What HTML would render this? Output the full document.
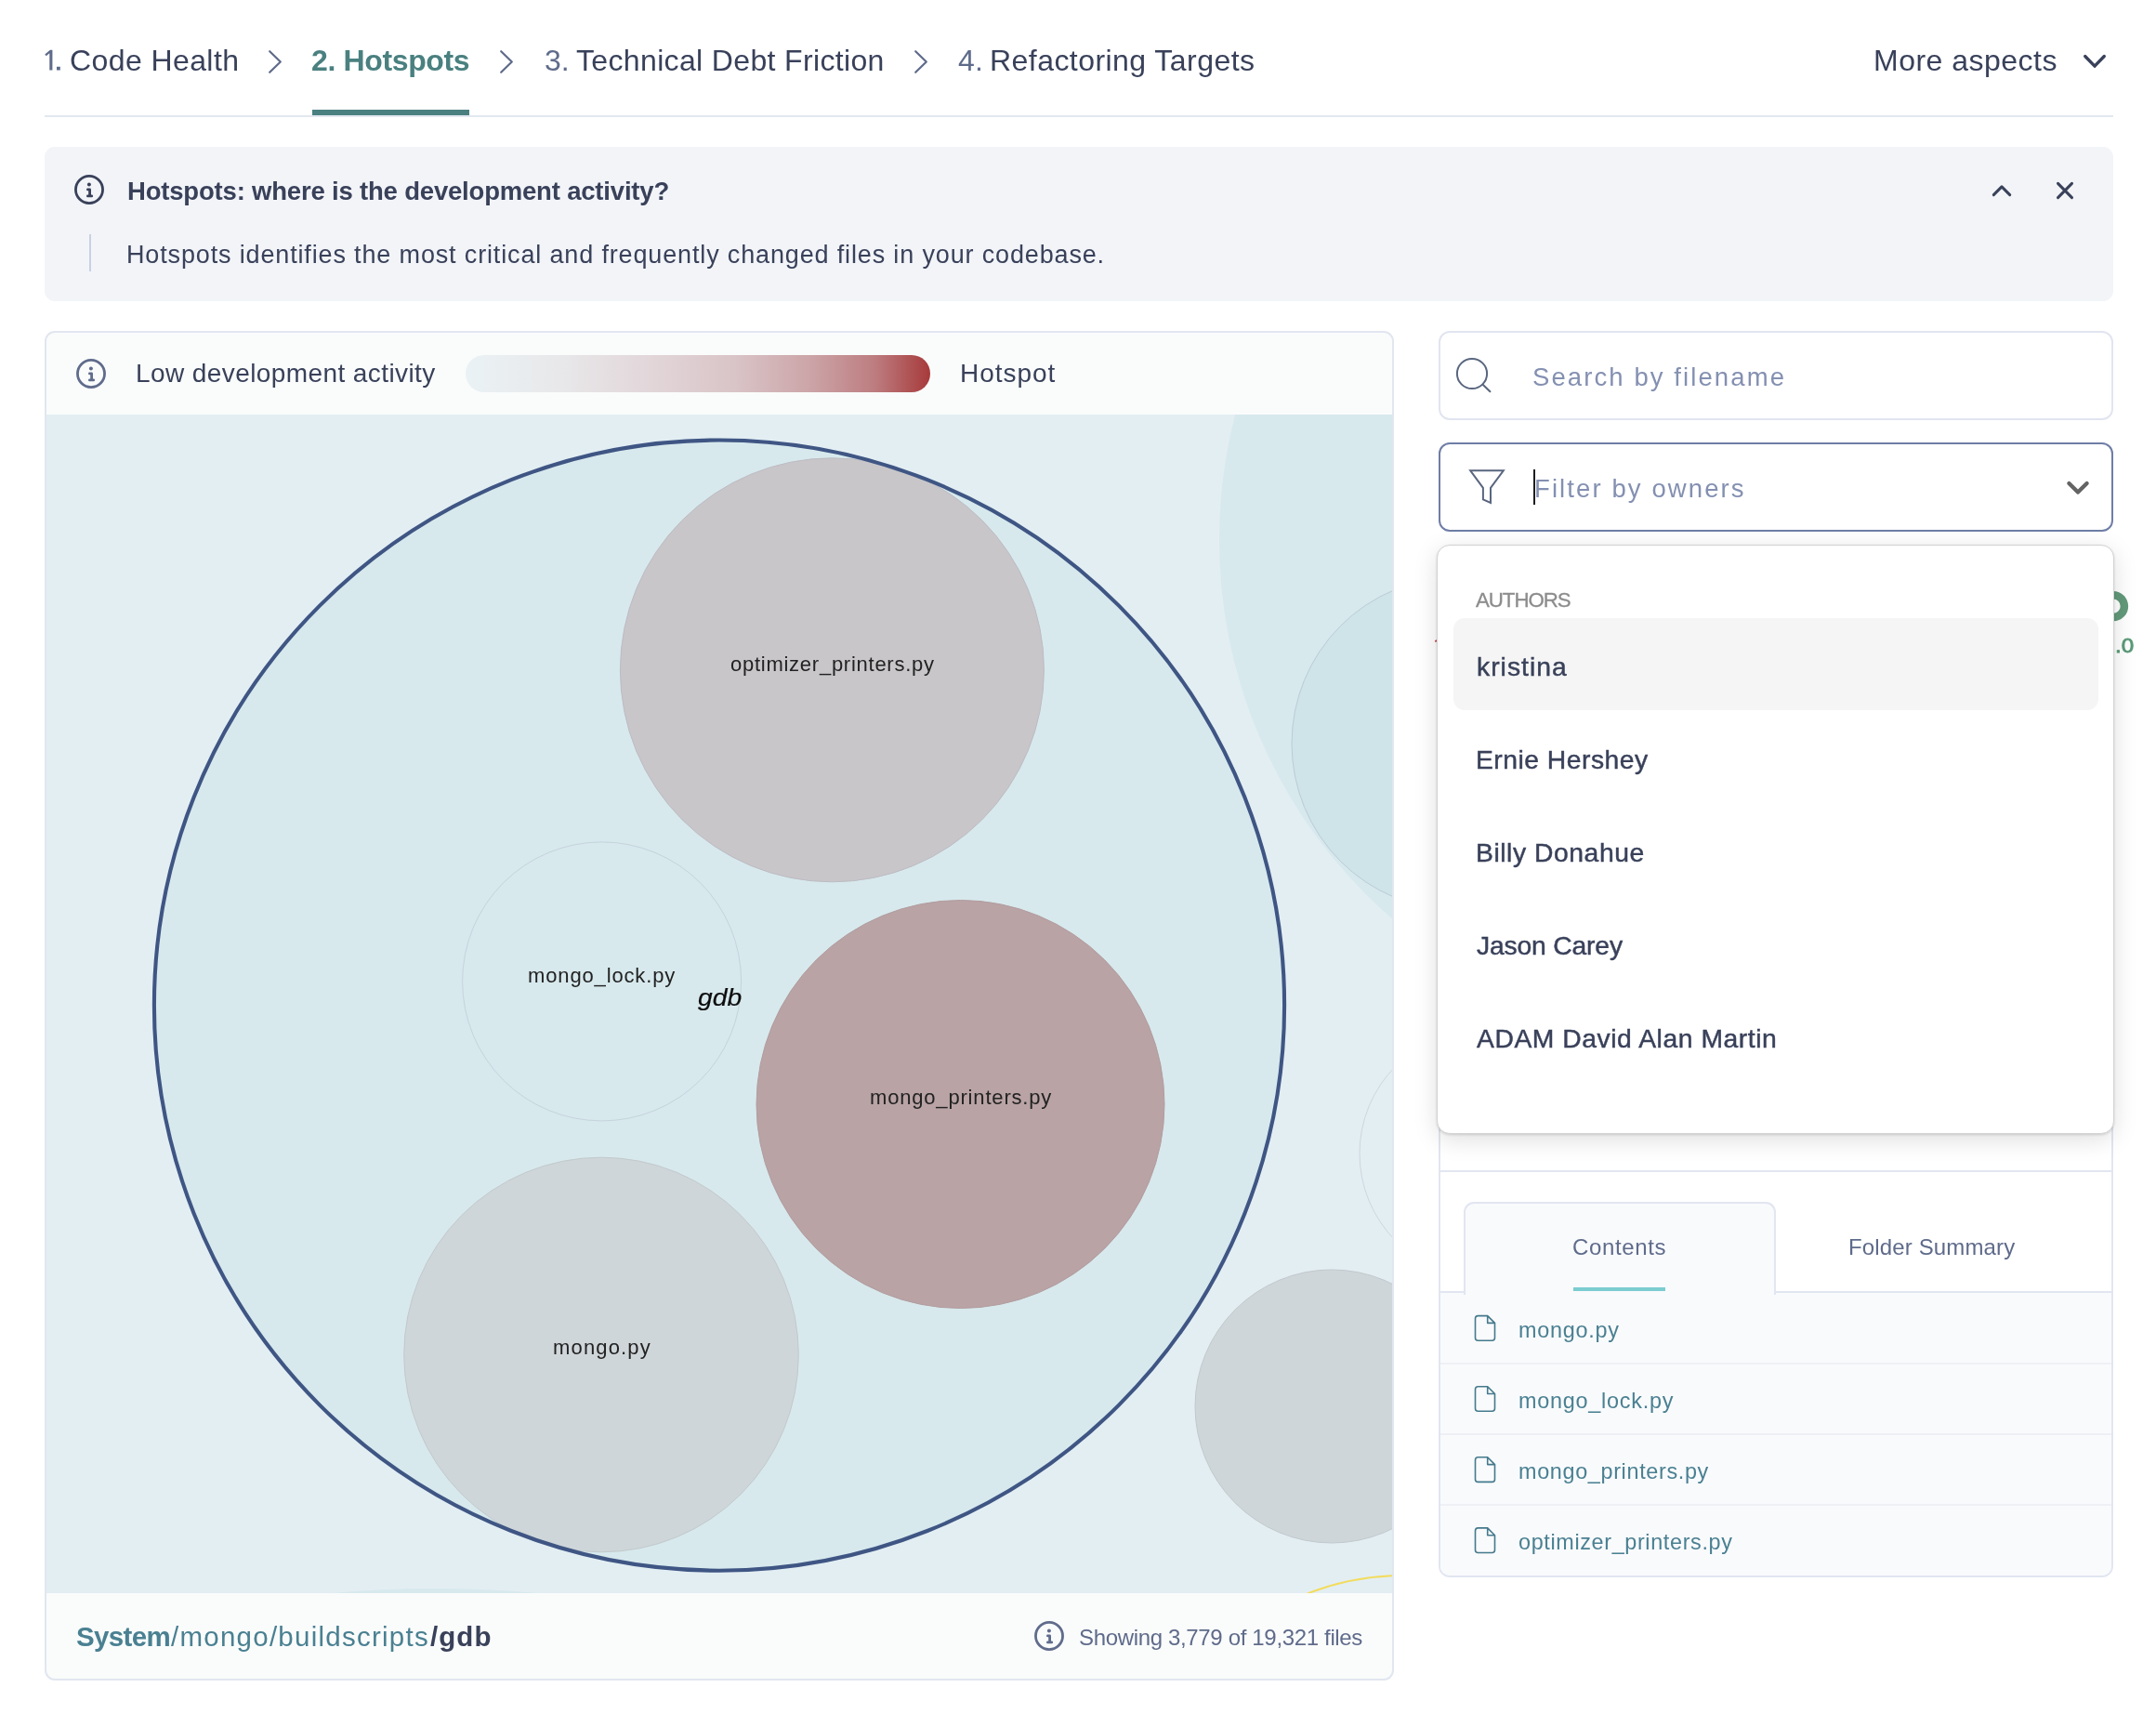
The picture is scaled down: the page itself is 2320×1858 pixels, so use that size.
<!DOCTYPE html>
<html lang="en">
<head>
<meta charset="utf-8">
<title>Hotspots</title>
<style>
*{box-sizing:border-box;margin:0;padding:0}
html,body{width:2320px;height:1858px;overflow:hidden;background:#fff}
body{position:relative;font-family:"Liberation Sans",sans-serif;color:#39415a}
.abs{position:absolute}
.t{position:absolute;white-space:nowrap;line-height:1;will-change:transform}
.navline{left:48px;top:124px;width:2226px;height:2px;background:#e3e8f0}
.navon{left:336px;top:118px;width:169px;height:6px;background:#4a8080}
.banner{left:48px;top:158px;width:2226px;height:166px;background:#f2f4f8;border-radius:11px}
.panel{left:48px;top:356px;width:1452px;height:1452px;border:2px solid #e1e6f0;border-radius:11px;overflow:hidden;background:#fafcfb}
.map{left:0;top:88px;width:1448px;height:1268px;background:#e3eef3;overflow:hidden}
.grad{left:450.5px;top:24px;width:500.5px;height:40px;border-radius:20px;background:linear-gradient(90deg,#eaf2f5 0%,#e8e8ea 20%,#e2d6d9 40%,#d9c4c7 58%,#cca5a8 74%,#bd7d80 88%,#a73a3b 100%)}
.box{left:1548px;width:726px;border-radius:12px;background:#fff}
.search{top:356px;height:96px;border:2px solid #e1e5f0}
.filter{top:476px;height:96px;border:2px solid #6f7ea6}
.drop{left:1546.3px;top:586.3px;width:729.2px;height:633.8px;background:#fff;border-radius:14px;border:1.7px solid #d3d3d3;box-shadow:0 6px 26px rgba(0,0,0,.13),0 1px 3px rgba(0,0,0,.14)}
.card{left:1548px;top:1170px;width:726px;height:527px;border:2px solid #e1e6f0;border-radius:12px;background:#fff;overflow:hidden}
</style>
</head>
<body>

<!-- NAV -->
<svg class="abs" style="left:0;top:40px" width="2320" height="50" viewBox="0 40 2320 50" fill="none" stroke-linecap="round" stroke-linejoin="round">
  <g stroke="#5f6b8b" stroke-width="2.2">
    <path d="M290.2 55.2 L301.8 66.5 L290.2 77.8"/>
    <path d="M539.2 55.2 L550.8 66.5 L539.2 77.8"/>
    <path d="M985.2 55.2 L996.8 66.5 L985.2 77.8"/>
  </g>
  <path d="M2243.7 60.5 L2254 71.2 L2264.3 60.5" stroke="#39415a" stroke-width="3.3"/>
  <path d="M48.3 58.4 L53.9 53.7 H56.4 V75.6 H53.3 V57.3 L49.7 60.3Z M61 71.8 H64.8 V75.6 H61Z" fill="#5f6b8b" stroke="none"/>
</svg>
<div class="abs navline"></div>
<div class="abs navon"></div>

<!-- BANNER -->
<div class="abs banner"></div>
<svg class="abs" style="left:79px;top:187.4px" width="34" height="34" viewBox="0 0 34 34" fill="none" stroke="#39415a" stroke-width="2.8" stroke-linecap="round" stroke-linejoin="round"><circle cx="17" cy="17" r="14.55"/><circle cx="16.9" cy="11.4" r="2" fill="#39415a" stroke="none"/><path d="M15.4 16.9H17.6V23.9M15.4 23.9H19.7"/></svg>
<div class="abs" style="left:96px;top:252px;width:2px;height:40px;background:#c9d0e2"></div>
<svg class="abs" style="left:2130px;top:185px" width="120" height="40" viewBox="2130 185 120 40" fill="none" stroke="#39415a" stroke-width="3" stroke-linecap="round" stroke-linejoin="round">
  <path d="M2145.3 209.6 L2154 200.9 L2162.7 209.6"/>
  <path d="M2214.5 197.4 L2229.5 212.6 M2229.5 197.4 L2214.5 212.6"/>
</svg>

<!-- MAP PANEL -->
<div class="abs panel">
  <div class="abs map">
    <svg class="abs" style="left:0;top:0" width="1448" height="1268" viewBox="50 446 1448 1268">
      <circle cx="1851" cy="581" r="539" fill="#d7e9ed"/>
      <circle cx="1569" cy="800" r="179" fill="#cee4e8" stroke="#bccbd6" stroke-width="1"/>
      <circle cx="1596" cy="1241" r="133" fill="#e3eef3" stroke="#cdd6dc" stroke-width="1"/>
      <circle cx="1433" cy="1513" r="147" fill="#cfd6d9" stroke="#c2c9cd" stroke-width="1"/>
      <circle cx="1510" cy="1978" r="283" fill="none" stroke="#f2dc5d" stroke-width="2"/>
      <circle cx="468" cy="2944" r="1235" fill="#d7e9ed"/>
      <circle cx="774" cy="1081.6" r="608.1" fill="#d7e9ed"/>
      <circle cx="895.4" cy="720.8" r="228" fill="#c8c6c9" stroke="#bdbcc4" stroke-width="1"/>
      <circle cx="647.6" cy="1055.9" r="150" fill="#d7e9ed" stroke="#c6d3dc" stroke-width="1"/>
      <circle cx="1033.5" cy="1188" r="219.5" fill="#b9a3a5" stroke="#b29da0" stroke-width="1"/>
      <circle cx="647" cy="1457.5" r="212.3" fill="#cfd6d9" stroke="#c2c9cd" stroke-width="1"/>
      <circle cx="774" cy="1081.6" r="608.1" fill="none" stroke="#3f5684" stroke-width="4.1"/>
    </svg>
  </div>
  <svg class="abs" style="left:31px;top:26.9px" width="34" height="34" viewBox="0 0 34 34" fill="none" stroke="#606c8c" stroke-width="2.8" stroke-linecap="round" stroke-linejoin="round"><circle cx="17" cy="17" r="14.55"/><circle cx="16.9" cy="11.4" r="2" fill="#606c8c" stroke="none"/><path d="M15.4 16.9H17.6V23.9M15.4 23.9H19.7"/></svg>
  <div class="abs grad"></div>
  <svg class="abs" style="left:1062px;top:1385px" width="34" height="34" viewBox="0 0 34 34" fill="none" stroke="#606c8c" stroke-width="2.8" stroke-linecap="round" stroke-linejoin="round"><circle cx="17" cy="17" r="14.55"/><circle cx="16.9" cy="11.4" r="2" fill="#606c8c" stroke="none"/><path d="M15.4 16.9H17.6V23.9M15.4 23.9H19.7"/></svg>
</div>

<!-- RIGHT COLUMN -->
<div class="abs box search"></div>
<div class="abs box filter"></div>
<svg class="abs" style="left:1556px;top:376px" width="80" height="180" viewBox="1556 376 80 180" fill="none" stroke="#59667f" stroke-width="2">
  <circle cx="1584" cy="402" r="16.1"/>
  <path d="M1595.6 413.7 L1603.4 421.2" stroke-linecap="round"/>
  <path d="M1582.2 506.3 H1617.8 L1604 524.8 V541 L1595.9 537.4 V524.8 Z" stroke-linejoin="miter"/>
</svg>
<div class="abs" style="left:1650.2px;top:505px;width:2px;height:38px;background:#1d1d1f"></div>
<svg class="abs" style="left:2216px;top:510px" width="40" height="30" viewBox="2216 510 40 30" fill="none" stroke="#646464" stroke-width="4.3" stroke-linecap="round" stroke-linejoin="round"><path d="M2226.4 520 L2236 529.6 L2245.6 520"/></svg>

<!-- card below (partially covered by dropdown) -->
<div class="abs card">
  <div class="abs" style="left:0;top:87px;width:722px;height:2px;background:#e1e6f0"></div>
  <div class="abs" style="left:0;top:217px;width:722px;height:320px;background:#f9fafc;border-top:2px solid #e1e6f0"></div>
  <div class="abs" style="left:24.5px;top:121px;width:336.5px;height:100px;background:#f9fafc;border:2px solid #e1e6f0;border-bottom:none;border-radius:11px 11px 0 0"></div>
  <div class="abs" style="left:143px;top:213px;width:99px;height:4px;background:#7bcdd1"></div>
  <div class="abs" style="left:0;top:294px;width:722px;height:2px;background:#eef0f5"></div>
  <div class="abs" style="left:0;top:370px;width:722px;height:2px;background:#eef0f5"></div>
  <div class="abs" style="left:0;top:446px;width:722px;height:2px;background:#eef0f5"></div>
</div>
<svg class="abs" style="left:1580px;top:1410px" width="40" height="270" viewBox="1580 1410 40 270" fill="none" stroke="#447a8c" stroke-width="1.6" stroke-linejoin="round">
  <path d="M1587.5 1418.6a3 3 0 0 1 3-3h10.2l7.8 7.8v15.8a3 3 0 0 1-3 3h-15a3 3 0 0 1-3-3z M1600.7 1415.6v7.8h7.8"/>
  <path d="M1587.5 1494.7a3 3 0 0 1 3-3h10.2l7.8 7.8v15.8a3 3 0 0 1-3 3h-15a3 3 0 0 1-3-3z M1600.7 1491.7v7.8h7.8"/>
  <path d="M1587.5 1570.8a3 3 0 0 1 3-3h10.2l7.8 7.8v15.8a3 3 0 0 1-3 3h-15a3 3 0 0 1-3-3z M1600.7 1567.8v7.8h7.8"/>
  <path d="M1587.5 1646.9a3 3 0 0 1 3-3h10.2l7.8 7.8v15.8a3 3 0 0 1-3 3h-15a3 3 0 0 1-3-3z M1600.7 1643.9v7.8h7.8"/>
</svg>

<!-- peeking bits behind dropdown -->
<svg class="abs" style="left:2250px;top:630px" width="60" height="80" viewBox="2250 630 60 80"><circle cx="2274" cy="652.2" r="11.9" fill="none" stroke="#629a7a" stroke-width="8.5"/></svg>
<div class="t" style="left:2276px;top:684px;font-size:22px;color:#5a9a78;-webkit-text-stroke:.8px #5a9a78;transform:scaleX(1.1);transform-origin:0 0">.0</div>
<div class="abs" style="left:1546.5px;top:664px;width:2px;height:10px;background:#c9444e"></div>
<div class="abs" style="left:1544px;top:687.5px;width:5px;height:2px;background:#c9444e;transform:rotate(-25deg)"></div>

<!-- DROPDOWN -->
<div class="abs drop"></div>
<div class="abs" style="left:1564px;top:665px;width:694px;height:99px;border-radius:12px;background:#f5f5f5"></div>

<div class="t" id="n1b" style="left:74.7px;top:48.8px;font-size:32px;letter-spacing:0.41px;color:#39415a">Code Health</div>
<div class="t" id="n2" style="left:335.1px;top:48.8px;font-size:32px;letter-spacing:-0.36px;color:#4a8080;font-weight:bold">2. Hotspots</div>
<div class="t" id="n3a" style="left:585.7px;top:48.8px;font-size:32px;letter-spacing:-0.09px;color:#5f6b8b">3.</div>
<div class="t" id="n3b" style="left:620.4px;top:48.8px;font-size:32px;letter-spacing:0.35px;color:#39415a">Technical Debt Friction</div>
<div class="t" id="n4a" style="left:1031.4px;top:48.8px;font-size:32px;letter-spacing:0.18px;color:#5f6b8b">4.</div>
<div class="t" id="n4b" style="left:1064.7px;top:48.8px;font-size:32px;letter-spacing:0.45px;color:#39415a">Refactoring Targets</div>
<div class="t" id="more" style="left:2016.2px;top:48.8px;font-size:32px;letter-spacing:0.49px;color:#39415a">More aspects</div>
<div class="t" id="btitle" style="left:136.9px;top:192.0px;font-size:27.5px;letter-spacing:-0.19px;color:#39415a;font-weight:bold">Hotspots: where is the development activity?</div>
<div class="t" id="bbody" style="left:136.0px;top:260.8px;font-size:27px;letter-spacing:0.85px;color:#39415a">Hotspots identifies the most critical and frequently changed files in your codebase.</div>
<div class="t" id="leg1" style="left:145.7px;top:388.0px;font-size:28px;letter-spacing:0.41px;color:#39415a">Low development activity</div>
<div class="t" id="leg2" style="left:1033.0px;top:388.0px;font-size:28px;letter-spacing:0.98px;color:#39415a">Hotspot</div>
<div class="t" id="fp1" style="left:82.1px;top:1746.4px;font-size:29.5px;letter-spacing:-0.63px;color:#4a8092;font-weight:bold">System</div>
<div class="t" id="fp2" style="left:184.1px;top:1746.4px;font-size:29.5px;letter-spacing:1.25px;color:#4a8092">/mongo/buildscripts</div>
<div class="t" id="fp3" style="left:463.2px;top:1746.4px;font-size:29.5px;letter-spacing:1.05px;color:#39415a;font-weight:bold">/gdb</div>
<div class="t" id="show" style="left:1160.7px;top:1750.0px;font-size:24px;letter-spacing:-0.34px;color:#5f6b8b">Showing 3,779 of 19,321 files</div>
<div class="t" id="search" style="left:1649.4px;top:392.3px;font-size:27.5px;letter-spacing:2.09px;color:#8490b1">Search by filename</div>
<div class="t" id="filter" style="left:1651.2px;top:511.9px;font-size:27.5px;letter-spacing:2.10px;color:#8490b1">Filter by owners</div>
<div class="t" id="auth" style="left:1588.2px;top:635.0px;font-size:22.3px;letter-spacing:-1.05px;color:#8c8c8c;-webkit-text-stroke:.3px #8c8c8c">AUTHORS</div>
<div class="t" id="o1" style="left:1588.7px;top:702.8px;font-size:28.3px;letter-spacing:1.02px;color:#39415a;-webkit-text-stroke:.45px #39415a">kristina</div>
<div class="t" id="o2" style="left:1587.8px;top:802.9px;font-size:28.3px;letter-spacing:0.49px;color:#39415a;-webkit-text-stroke:.45px #39415a">Ernie Hershey</div>
<div class="t" id="o3" style="left:1587.5px;top:902.8px;font-size:28.3px;letter-spacing:0.55px;color:#39415a;-webkit-text-stroke:.45px #39415a">Billy Donahue</div>
<div class="t" id="o4" style="left:1588.8px;top:1002.9px;font-size:28.3px;letter-spacing:-0.18px;color:#39415a;-webkit-text-stroke:.45px #39415a">Jason Carey</div>
<div class="t" id="o5" style="left:1588.8px;top:1103.0px;font-size:28.3px;letter-spacing:0.54px;color:#39415a;-webkit-text-stroke:.45px #39415a">ADAM David Alan Martin</div>
<div class="t" id="tab1" style="left:1691.9px;top:1330.0px;font-size:24px;letter-spacing:0.64px;color:#5f6b8b">Contents</div>
<div class="t" id="tab2" style="left:1988.5px;top:1330.0px;font-size:24px;letter-spacing:0.14px;color:#5f6b8b">Folder Summary</div>
<div class="t" id="f1" style="left:1633.9px;top:1419.8px;font-size:23.4px;letter-spacing:0.73px;color:#4a8092">mongo.py</div>
<div class="t" id="f2" style="left:1633.9px;top:1496.1px;font-size:23.4px;letter-spacing:0.76px;color:#4a8092">mongo_lock.py</div>
<div class="t" id="f3" style="left:1633.9px;top:1572.2px;font-size:23.4px;letter-spacing:0.66px;color:#4a8092">mongo_printers.py</div>
<div class="t" id="f4" style="left:1633.9px;top:1648.3px;font-size:23.4px;letter-spacing:0.64px;color:#4a8092">optimizer_printers.py</div>
<div class="t" id="m1" style="left:785.5px;top:704.0px;font-size:22px;letter-spacing:0.74px;color:#222">optimizer_printers.py</div>
<div class="t" id="m2" style="left:567.9px;top:1038.5px;font-size:22px;letter-spacing:0.86px;color:#222">mongo_lock.py</div>
<div class="t" id="m3" style="left:751.3px;top:1060.8px;font-size:25px;letter-spacing:-0.00px;color:#0c0c0c;font-style:italic;-webkit-text-stroke:.2px #0c0c0c;transform:scaleX(1.13);transform-origin:0 0">gdb</div>
<div class="t" id="m4" style="left:935.8px;top:1169.6px;font-size:22px;letter-spacing:0.82px;color:#222">mongo_printers.py</div>
<div class="t" id="m5" style="left:594.5px;top:1439.4px;font-size:22px;letter-spacing:1.16px;color:#222">mongo.py</div>
</body>
</html>
